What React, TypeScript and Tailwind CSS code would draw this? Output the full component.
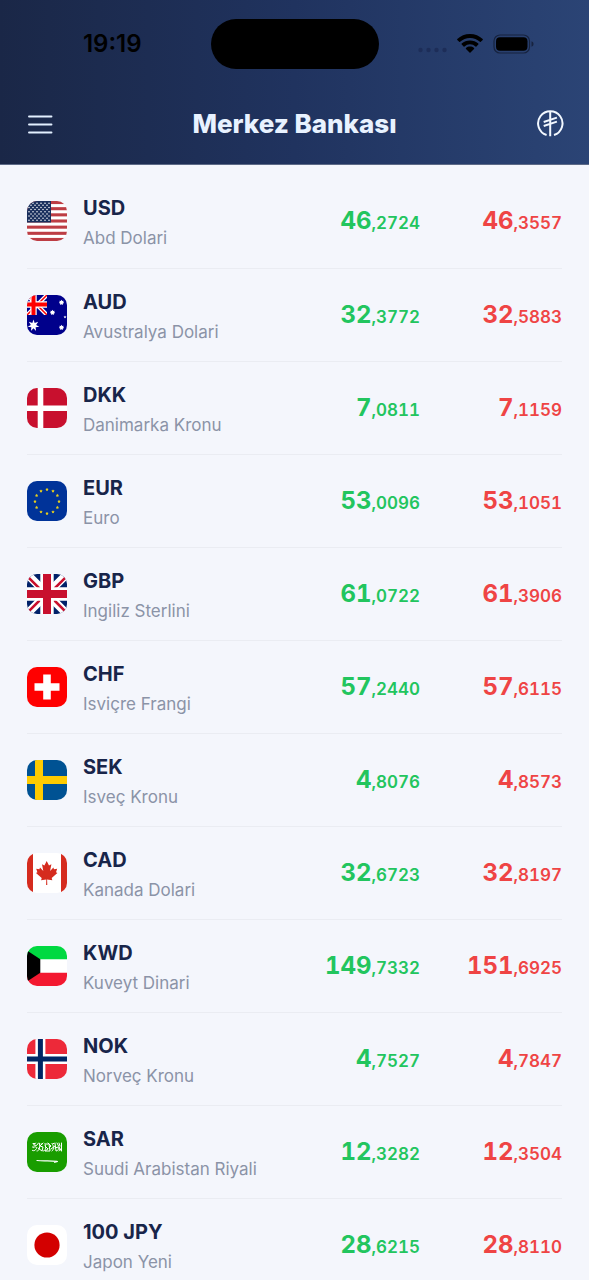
import type { ReactNode } from "react";

type Rate = {
  code: string;
  name: string;
  buy: string;
  sell: string;
  flag: ReactNode;
};

function star(cx: number, cy: number, r: number, points: number, inner = 0.45) {
  return Array.from({ length: points * 2 }, (_, i) => {
    const radius = i % 2 === 0 ? r : r * inner;
    const angle = (Math.PI * i) / points - Math.PI / 2;
    return `${(cx + radius * Math.cos(angle)).toFixed(2)},${(cy + radius * Math.sin(angle)).toFixed(2)}`;
  }).join(" ");
}

const flags = {
  us: (
    <>
      <path fill="#fff" d="M0 0h40v40H0z" />
      {[0, 2, 4, 6, 8, 10, 12].map((i) => (
        <rect key={i} y={(i * 40) / 13} width="40" height={40 / 13} fill="#bd3d44" />
      ))}
      <path fill="#192f5d" d="M0 0h24v21.5H0z" />
      {Array.from({ length: 9 }, (_, row) =>
        Array.from({ length: row % 2 ? 5 : 6 }, (_, col) => (
          <circle
            key={`${row}-${col}`}
            cx={2 + col * 4 + (row % 2 ? 2 : 0)}
            cy={2.15 + row * 2.15}
            r="0.75"
            fill="#fff"
          />
        ))
      )}
    </>
  ),
  au: (
    <>
      <path fill="#00008b" d="M0 0h40v40H0z" />
      <path stroke="#fff" strokeWidth="4" d="m0 0 20 20M20 0 0 20" />
      <path stroke="#f00" strokeWidth="1.5" d="m0 0 20 20M20 0 0 20" />
      <path stroke="#fff" strokeWidth="6.4" d="M6.5 0v20M0 9.5h20" />
      <path stroke="#f00" strokeWidth="4" d="M6.5 0v20M0 9.5h20" />
      <path fill="#00008b" d="M0 20h22v3H0zM20 0h3v23h-3z" />
      <polygon fill="#fff" points={star(6.5, 30.5, 6, 7)} />
      <polygon fill="#fff" points={star(34.5, 7.5, 2.7, 7, 0.65)} />
      <polygon fill="#fff" points={star(25.5, 17.5, 2.7, 7, 0.65)} />
      <polygon fill="#fff" points={star(34.5, 32.5, 2.7, 7, 0.65)} />
      <polygon fill="#fff" points={star(38, 22, 1.6, 5)} />
    </>
  ),
  dk: (
    <>
      <path fill="#c8102e" d="M0 0h40v40H0z" />
      <path stroke="#fff" strokeWidth="5.6" d="M13.5 0v40M0 20.2h40" />
    </>
  ),
  eu: (
    <>
      <path fill="#039" d="M0 0h40v40H0z" />
      {Array.from({ length: 12 }, (_, i) => (
        <polygon
          key={i}
          fill="#e8cf1c"
          points={star(
            20 + 12 * Math.sin((i * Math.PI) / 6),
            20.5 - 12 * Math.cos((i * Math.PI) / 6),
            1.7,
            5,
            0.55
          )}
        />
      ))}
    </>
  ),
  gb: (
    <>
      <path fill="#012169" d="M0 0h40v40H0z" />
      <path stroke="#fff" strokeWidth="8" d="m0 0 40 40M40 0 0 40" />
      <path
        stroke="#c8102e"
        strokeWidth="2.6"
        d="m-1 1 21 21M19 18l21 21M41 1 20 22M21 18-1 40"
      />
      <path stroke="#fff" strokeWidth="13.4" d="M20 0v40M0 20h40" />
      <path stroke="#c8102e" strokeWidth="8" d="M20 0v40M0 20h40" />
    </>
  ),
  ch: (
    <>
      <path fill="#f00" d="M0 0h40v40H0z" />
      <path stroke="#fff" strokeWidth="7.6" d="M20 7.5v25M7.5 20h25" />
    </>
  ),
  se: (
    <>
      <path fill="#005293" d="M0 0h40v40H0z" />
      <path stroke="#fecb00" strokeWidth="8" d="M12 0v40M0 20h40" />
    </>
  ),
  ca: (
    <>
      <path fill="#fff" d="M0 0h40v40H0z" />
      <path fill="#d52b1e" d="M0 0h6v40H0zM34 0h6v40h-6z" />
      <path
        fill="#d52b1e"
        d="M19.7 8 17.400 12.400 15 11.300 16.300 18 13 14.600 12.400 16.300 9.200 15.700 10.400 19.200 9 20.100 14.700 24.900 14.100 27.200 19.300 26.400 19.100 32h1.200L20.100 26.400 25.300 27.200 24.700 24.900 30.400 20.100 29 19.200 30.200 15.700 27 16.300 26.400 14.600 23.100 18 24.400 11.300 22 12.400z"
      />
    </>
  ),
  kw: (
    <>
      <path fill="#fff" d="M0 0h40v40H0z" />
      <path fill="#00d941" d="M0 0h40v13.3H0z" />
      <path fill="#f31830" d="M0 26.7h40V40H0z" />
      <path d="M0 4.5 13.3 13.3v13.4L0 35.5z" />
    </>
  ),
  no: (
    <>
      <path fill="#ed2939" d="M0 0h40v40H0z" />
      <path stroke="#fff" strokeWidth="10" d="M13.4 0v40M0 20h40" />
      <path stroke="#002664" strokeWidth="5" d="M13.4 0v40M0 20h40" />
    </>
  ),
  sa: (
    <>
      <path fill="#199d00" d="M0 0h40v40H0z" />
      <g fill="none" stroke="#fff" strokeWidth="1" strokeLinecap="round">
        <path d="M5.5 18.5c2 .8 3-.5 4-2s-2-2.5-3-1m2-4.5-2 2 3 .5 2-2.5M10 19c2 0 3-2 2.5-7.5M11 16l4 3 1-4-3-1 3-3M16 19c3 0 3-3 2-7.5M18 14l3 3-3 2h5l-1-7M21 11l3 3-2 2M25 19c2-1 2-5 0-7.5M24 17l4-3M28 11l1 8c2 0 3-2 2-4l-3 1M30 11l4 7.5M34.5 11v8M32 19c1 0 1-2 0-3M32 11l1 3" />
        <path d="M6 11.5h2M5.5 15h1M14 12h1M19 12h2M26 11.5h1" />
        <path d="M10 28.5c6 .8 13-.2 20 .8" strokeWidth="1.2" />
        <path d="m27.5 30.4 3-.8" />
      </g>
    </>
  ),
  jp: (
    <>
      <path fill="#fff" d="M0 0h40v40H0z" />
      <circle cx="20" cy="20" r="12.6" fill="#d30000" />
    </>
  ),
};

const rates: Rate[] = [
  { code: "USD", name: "Abd Dolari", buy: "46,2724", sell: "46,3557", flag: flags.us },
  { code: "AUD", name: "Avustralya Dolari", buy: "32,3772", sell: "32,5883", flag: flags.au },
  { code: "DKK", name: "Danimarka Kronu", buy: "7,0811", sell: "7,1159", flag: flags.dk },
  { code: "EUR", name: "Euro", buy: "53,0096", sell: "53,1051", flag: flags.eu },
  { code: "GBP", name: "Ingiliz Sterlini", buy: "61,0722", sell: "61,3906", flag: flags.gb },
  { code: "CHF", name: "Isviçre Frangi", buy: "57,2440", sell: "57,6115", flag: flags.ch },
  { code: "SEK", name: "Isveç Kronu", buy: "4,8076", sell: "4,8573", flag: flags.se },
  { code: "CAD", name: "Kanada Dolari", buy: "32,6723", sell: "32,8197", flag: flags.ca },
  { code: "KWD", name: "Kuveyt Dinari", buy: "149,7332", sell: "151,6925", flag: flags.kw },
  { code: "NOK", name: "Norveç Kronu", buy: "4,7527", sell: "4,7847", flag: flags.no },
  { code: "SAR", name: "Suudi Arabistan Riyali", buy: "12,3282", sell: "12,3504", flag: flags.sa },
  { code: "100 JPY", name: "Japon Yeni", buy: "28,6215", sell: "28,8110", flag: flags.jp },
];

function Price({ value }: { value: string }) {
  const [whole, fraction] = value.split(",");
  return (
    <>
      <span className="text-2xl font-bold">{whole}</span>
      <span className="text-[17px] font-semibold">,{fraction}</span>
    </>
  );
}

function StatusBar() {
  return (
    <div className="grid h-[87px] grid-cols-[1fr_168px_1fr] items-center">
      <span className="pl-3.5 text-center text-2xl font-semibold text-black">19:19</span>
      <div className="h-[50px] rounded-full bg-black" />
      <div className="flex items-center justify-center gap-2.5 pr-3.5">
        <svg className="mt-3 h-1.5 w-[29px]" viewBox="0 0 29 6" fill="#1d2d58">
          <circle cx="2.5" cy="3" r="2.2" />
          <circle cx="10.5" cy="3" r="2.2" />
          <circle cx="18.5" cy="3" r="2.2" />
          <circle cx="26.5" cy="3" r="2.2" />
        </svg>
        <svg className="h-[19px] w-[26px]" viewBox="0 0 26 19">
          <path d="M13 0C18 0 22.4 1.9 25.7 5c.3.3.3.6 0 .9l-1.9 1.9c-.2.3-.6.3-.9 0A14.3 14.3 0 0 0 13 3.9 14.3 14.3 0 0 0 3.1 7.8c-.3.3-.7.3-.9 0L.3 5.9C0 5.6 0 5.3.3 5 3.6 1.9 8 0 13 0z" />
          <path d="M13 6.4c3.2 0 6.1 1.2 8.3 3.2.3.3.3.7 0 .9l-1.9 1.9c-.3.3-.6.3-.9 0a8.2 8.2 0 0 0-11 0c-.3.3-.6.3-.9 0l-1.9-1.9c-.3-.2-.3-.6 0-.9 2.2-2 5.1-3.2 8.3-3.2z" />
          <path d="M13 12.6c1.5 0 2.9.5 4 1.4.3.3.3.6 0 .9l-3.5 3.5c-.3.3-.7.3-1 0L9 14.9c-.3-.3-.3-.6 0-.9 1.1-.9 2.5-1.4 4-1.4z" />
        </svg>
        <svg className="h-5 w-[42px]" viewBox="0 0 42 20">
          <rect x="1" y="1" width="35.5" height="18" rx="6" fill="none" stroke="#17233f" strokeWidth="1.2" />
          <rect x="3" y="3.2" width="31.5" height="13.6" rx="4" />
          <path fill="#17233f" d="M38.5 7.2c1.3.4 2 1.5 2 2.8s-.7 2.4-2 2.8z" />
        </svg>
      </div>
    </div>
  );
}

export default function App() {
  return (
    <div className="min-h-screen bg-[#f4f6fc] font-[Inter,sans-serif]">
      <header className="border-b border-[#5d6a87] bg-linear-to-r from-[#1a2747] via-[#20335f] to-[#2b4475]">
        <StatusBar />
        <div className="grid h-[77px] grid-cols-[1fr_auto_1fr] items-center px-[25px] pb-1">
          <button type="button" aria-label="Menü" className="justify-self-start">
            <svg className="h-[30px] w-[30px]" viewBox="0 0 30 30">
              <path
                d="M4 7.5h22.5M4 15.5h22.5M4 23.5h22.5"
                stroke="#e3f0ff"
                strokeWidth="1.9"
                strokeLinecap="round"
              />
            </svg>
          </button>
          <h1 className="text-[26px] font-extrabold text-[#e8f2ff]">Merkez Bankası</h1>
          <button type="button" aria-label="Türk lirası" className="justify-self-end">
            <svg
              className="h-[27px] w-[27px]"
              viewBox="0 0 27 27"
              fill="none"
              stroke="#f2f8ff"
              strokeWidth="2"
            >
              <path d="M9.6 25A12.2 12.2 0 1 1 17 25" />
              <path d="M13.2 2v24.2M6.7 12l13.2-4.4M6.7 16l13.2-4.4" />
            </svg>
          </button>
        </div>
      </header>

      <main className="px-[27px] pt-2.5">
        <table className="w-full">
          <tbody>
            {rates.map((rate) => (
              <tr key={rate.code} className="h-[93px] border-b border-[#eaecf2]">
                <th scope="row" className="p-0 text-left align-middle">
                  <div className="flex items-center gap-4">
                    <svg
                      className="h-10 w-10 shrink-0 rounded-[10px]"
                      viewBox="0 0 40 40"
                      aria-hidden="true"
                    >
                      {rate.flag}
                    </svg>
                    <div className="pt-0.5">
                      <div className="text-xl leading-8 font-bold text-[#18254a]">{rate.code}</div>
                      <div className="text-[17px] leading-7 font-normal text-[#8b93a7]">
                        {rate.name}
                      </div>
                    </div>
                  </div>
                </th>
                <td className="p-0 text-right text-[#22c55e] tabular-nums">
                  <Price value={rate.buy} />
                </td>
                <td className="w-[142px] p-0 text-right text-[#ef4444] tabular-nums">
                  <Price value={rate.sell} />
                </td>
              </tr>
            ))}
          </tbody>
        </table>
      </main>
    </div>
  );
}
